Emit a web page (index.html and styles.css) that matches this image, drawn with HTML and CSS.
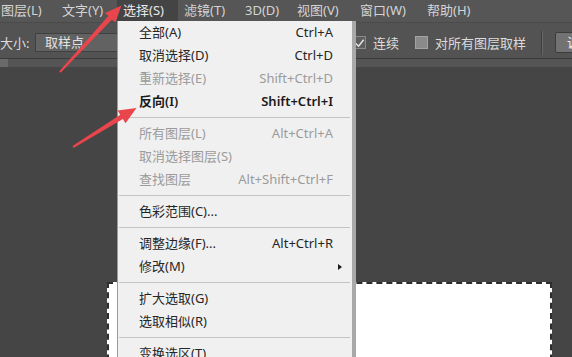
FILE: index.html
```html
<!DOCTYPE html>
<html lang="zh-CN">
<head>
<meta charset="utf-8">
<title>选择菜单</title>
<link rel="stylesheet" href="styles.css">
</head>
<body>
<div class="app">
  <div class="menubar">
    <span class="mi first">图层(L)</span>
    <span class="mi">文字(Y)</span>
    <span class="mi active">选择(S)</span>
    <span class="mi">滤镜(T)</span>
    <span class="mi">3D(D)</span>
    <span class="mi">视图(V)</span>
    <span class="mi">窗口(W)</span>
    <span class="mi">帮助(H)</span>
  </div>
  <div class="options">
    <span class="opt-label">大小:</span>
    <div class="select">取样点</div>
    <label class="chk on"><span class="box"><svg viewBox="0 0 12 12" width="12" height="12"><path d="M2 6.5 L5 9.5 L10.5 2.5" fill="none" stroke="#e6e6e6" stroke-width="1.6"/></svg></span>连续</label>
    <label class="chk off"><span class="box"></span>对所有图层取样</label>
    <span class="vsep"></span>
    <span class="btn">调整边缘...</span>
  </div>
  <div class="tabs"><span class="tab"></span></div>
  <div class="canvas"><div class="doc"></div></div>
</div>

<div class="menu">
  <div class="item"><span>全部(A)</span><span>Ctrl+A</span></div>
  <div class="item"><span>取消选择(D)</span><span>Ctrl+D</span></div>
  <div class="item dis"><span>重新选择(E)</span><span>Shift+Ctrl+D</span></div>
  <div class="item strong"><span>反向(I)</span><span>Shift+Ctrl+I</span></div>
  <div class="sep"></div>
  <div class="item dis"><span>所有图层(L)</span><span>Alt+Ctrl+A</span></div>
  <div class="item dis"><span>取消选择图层(S)</span><span></span></div>
  <div class="item dis"><span>查找图层</span><span>Alt+Shift+Ctrl+F</span></div>
  <div class="sep"></div>
  <div class="item"><span>色彩范围(C)...</span><span></span></div>
  <div class="sep"></div>
  <div class="item"><span>调整边缘(F)...</span><span>Alt+Ctrl+R</span></div>
  <div class="item sub"><span>修改(M)</span><span class="tri"></span></div>
  <div class="sep"></div>
  <div class="item"><span>扩大选取(G)</span><span></span></div>
  <div class="item"><span>选取相似(R)</span><span></span></div>
  <div class="sep"></div>
  <div class="item"><span>变换选区(T)</span><span></span></div>
</div>

<svg class="arrows" width="572" height="357" viewBox="0 0 572 357">
  <polygon fill="#e8464c" points="60.7,72.7 112,19.5 115.3,22.5 121.5,5.5 105,13 108.3,16 59.3,71.3"/>
  <polygon fill="#e8464c" points="73.5,147.9 122.9,119.1 125.5,123.3 136.5,108 117.6,110.6 120.2,114.8 72.5,146.1"/>
</svg>
</body>
</html>
```

FILE: styles.css
```css
* { box-sizing: border-box; }
html, body {
  margin: 0;
  padding: 0;
}
body {
  width: 572px;
  height: 357px;
  overflow: hidden;
  position: relative;
  background: #454545;
  font-family: "Noto Sans", "Noto Sans CJK SC", sans-serif;
  font-size: 13px;
}
.app {
  display: flex;
  flex-direction: column;
  height: 357px;
}
.menubar {
  height: 22px;
  flex: none;
  display: grid;
  grid-template-columns: 56px 61px 61px 61px 52px 63px 67px 80px;
  background: #565656;
  color: #d4d4d4;
  line-height: 20px;
  white-space: nowrap;
}
.mi { padding-left: 6px; }
.mi.first { padding-left: 1px; }
.mi.active { background: #444444; color: #e8e8e8; }

.options {
  height: 36px;
  flex: none;
  display: flex;
  align-items: center;
  padding-top: 4px;
  background: #535353;
  border-top: 1px solid #4a4a4a;
  color: #dcdcdc;
  white-space: nowrap;
  overflow: hidden;
}
.options > * { flex: none; }
.opt-label { width: 35px; }
.select {
  width: 100px;
  height: 19px;
  background: #626262;
  border: 1px solid #404040;
  padding-left: 9px;
  line-height: 17px;
  color: #e2e2e2;
}
.chk {
  display: flex;
  align-items: center;
}
.chk .box {
  width: 13px;
  height: 13px;
  margin-right: 7px;
  display: flex;
  align-items: center;
  justify-content: center;
}
.chk.on { margin-left: 218px; }
.chk.on .box { background: #5e5e5e; border: 1px solid #8a8a8a; }
.chk.off { margin-left: 16px; }
.chk.off .box { background: #8a8a8a; border: 1px solid #a3a3a3; }
.vsep {
  width: 2px;
  height: 24px;
  margin-left: 15px;
  border-left: 1px solid #3e3e3e;
  border-right: 1px solid #676767;
}
.btn {
  margin-left: 12px;
  height: 21px;
  padding: 0 0 0 11px;
  background: #727272;
  border: 1px solid #3c3c3c;
  border-radius: 2px;
  line-height: 19px;
  color: #ececec;
}
.tabs {
  height: 9px;
  flex: none;
  background: #555555;
  border-top: 1px solid #3a3a3a;
}
.tab {
  display: block;
  width: 8px;
  height: 8px;
  background: #6a6a6a;
}
.canvas {
  flex: 1;
  background: #454545;
  padding: 215px 0 0 107px;
  overflow: hidden;
}
.doc {
  width: 445px;
  height: 120px;
  background: #ffffff;
  border: 2px dashed #2e2e2e;
}

.menu {
  position: absolute;
  left: 117px;
  top: 21px;
  width: 239px;
  height: 345px;
  background: #f0f0f0;
  border-left: 1px solid #9a9a9a;
  border-right: 4px solid #a9a9a9;
  color: #262626;
  z-index: 5;
}
.item {
  height: 23px;
  line-height: 23px;
  display: flex;
  justify-content: space-between;
  align-items: center;
  padding: 0 19px 0 21px;
  white-space: nowrap;
}
.item.dis { color: #9b9b9b; }
.item.strong { font-weight: 600; color: #1a1a1a; }
.item.sub { padding-right: 10px; }
.tri {
  width: 0;
  height: 0;
  border-top: 3.5px solid transparent;
  border-bottom: 3.5px solid transparent;
  border-left: 4px solid #1a1a1a;
}
.sep {
  height: 1px;
  margin: 4px 2px 4px 1px;
  background: #c4c4c4;
}
.arrows {
  position: absolute;
  left: 0;
  top: 0;
  z-index: 10;
  pointer-events: none;
}
```
